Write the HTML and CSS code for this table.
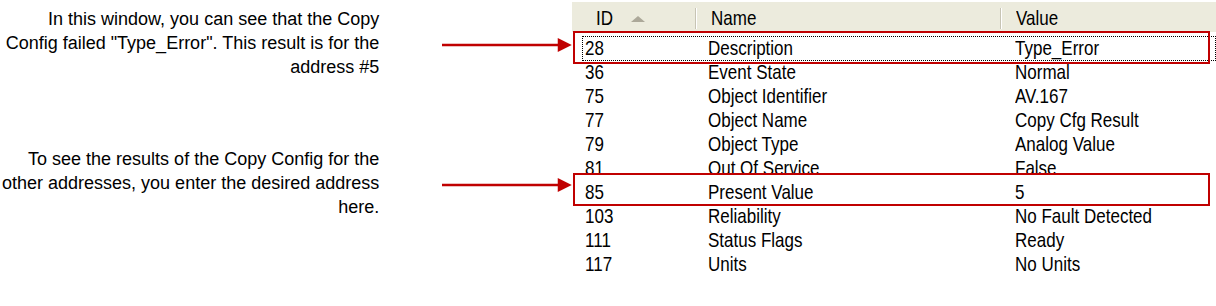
FILE: index.html
```html
<!DOCTYPE html>
<html lang="en">
<head>
    <meta charset="UTF-8">
    <meta name="viewport" content="width=device-width, initial-scale=1.0">
    <title>Copy Config Result</title>
    <link rel="stylesheet" href="styles.css">
</head>
<body>
    <div class="page">
        <div class="notes">
            <div class="note note-first">
                <p>In this window, you can see that the Copy<br>Config failed "Type_Error". This result is for the<br>address #5</p>
                <svg class="arrow" width="130" height="14" viewBox="0 0 130 14">
                    <line x1="0" y1="7" x2="118" y2="7" stroke="#c00000" stroke-width="2.5"/>
                    <polygon points="116,0 130,7 116,14" fill="#c00000"/>
                </svg>
            </div>
            <div class="note note-second">
                <p>To see the results of the Copy Config for the<br>other addresses, you enter the desired address<br>here.</p>
                <svg class="arrow" width="130" height="14" viewBox="0 0 130 14">
                    <line x1="0" y1="7" x2="118" y2="7" stroke="#c00000" stroke-width="2.5"/>
                    <polygon points="116,0 130,7 116,14" fill="#c00000"/>
                </svg>
            </div>
        </div>

        <div class="list">
            <div class="list-header">
                <div class="col-head head-id"><span class="txt">ID</span> <span class="sort-up"></span></div>
                <div class="col-head head-name"><span class="txt">Name</span></div>
                <div class="col-head head-value"><span class="txt">Value</span></div>
            </div>
            <div class="rows">
                <div class="row marked focused"><span>28</span><span>Description</span><span>Type_Error</span></div>
                <div class="row"><span>36</span><span>Event State</span><span>Normal</span></div>
                <div class="row"><span>75</span><span>Object Identifier</span><span>AV.167</span></div>
                <div class="row"><span>77</span><span>Object Name</span><span>Copy Cfg Result</span></div>
                <div class="row"><span>79</span><span>Object Type</span><span>Analog Value</span></div>
                <div class="row"><span>81</span><span>Out Of Service</span><span>False</span></div>
                <div class="row marked marked-low"><span>85</span><span>Present Value</span><span>5</span></div>
                <div class="row"><span>103</span><span>Reliability</span><span>No Fault Detected</span></div>
                <div class="row"><span>111</span><span>Status Flags</span><span>Ready</span></div>
                <div class="row"><span>117</span><span>Units</span><span>No Units</span></div>
            </div>
        </div>
    </div>
</body>
</html>
```

FILE: styles.css
```css
body {
    margin: 0;
    background: #fff;
    font-family: "Liberation Sans", Arial, sans-serif;
    color: #000;
}
.page {
    display: flex;
    width: 1216px;
    height: 306px;
    overflow: hidden;
}
.notes {
    width: 572px;
    flex-shrink: 0;
}
.note {
    display: flex;
    align-items: center;
}
.note p {
    width: 380px;
    margin: 0;
    font-size: 18px;
    line-height: 24px;
    text-align: right;
}
.note-first {
    margin-top: 7px;
}
.note-second {
    margin-top: 68px;
}
.arrow {
    margin-left: 63px;
    margin-top: 4px;
    display: block;
}
.list {
    flex: 1;
    font-size: 17px;
}
.list-header {
    display: grid;
    grid-template-columns: 123px 305px 1fr;
    height: 30px;
    margin-top: 2px;
    background: #ecebdd;
}
.col-head {
    position: relative;
    display: flex;
    align-items: center;
    padding-top: 3px;
}
.txt, .row span {
    display: inline-block;
    transform: scaleY(1.15);
}
.head-id {
    padding-left: 24px;
}
.head-name {
    padding-left: 16px;
}
.head-value {
    padding-left: 16px;
}
.head-name::before, .head-value::before {
    content: "";
    position: absolute;
    left: 0;
    top: 6px;
    bottom: 3px;
    width: 1px;
    background: #c7c4b4;
    box-shadow: 1px 0 0 #fff;
}
.sort-up {
    width: 0;
    height: 0;
    margin-left: 18px;
    border-left: 7px solid transparent;
    border-right: 7px solid transparent;
    border-bottom: 6px solid #aca899;
}
.rows {
    padding-top: 4px;
}
.row {
    position: relative;
    display: grid;
    grid-template-columns: 123px 305px 1fr;
    height: 24px;
    line-height: 25px;
}
.row span:first-child {
    padding-left: 13px;
}
.row span:nth-child(2) {
    padding-left: 13px;
}
.row span:nth-child(3) {
    padding-left: 15px;
}
.focused::before {
    content: "";
    position: absolute;
    left: 10px;
    right: 0;
    top: 0;
    bottom: -1px;
    border: 1px dotted #000;
}
.marked::after {
    content: "";
    position: absolute;
    left: 1px;
    right: 6px;
    top: -5px;
    bottom: -4px;
    border: 2px solid #c00000;
}
.marked-low::after {
    top: -7px;
    bottom: -2px;
}
```
